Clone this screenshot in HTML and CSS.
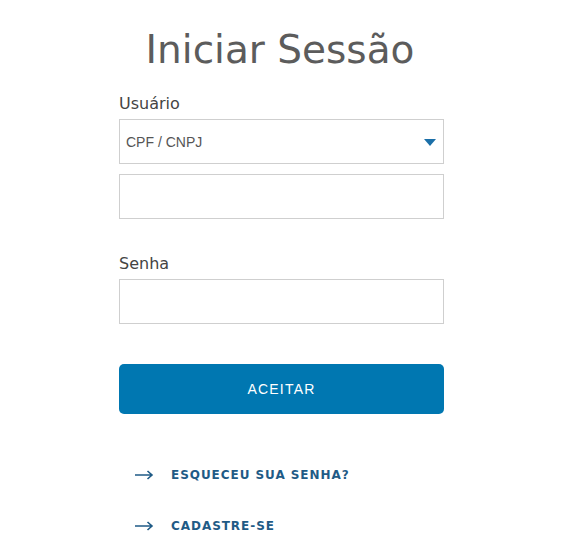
FILE: index.html
```html
<!DOCTYPE html>
<html lang="pt-BR">
<head>
    <meta charset="UTF-8">
    <meta name="viewport" content="width=device-width, initial-scale=1.0">
    <title>Iniciar Sessão</title>
    <link rel="stylesheet" href="styles.css">
</head>
<body>
    <main class="login">
        <h1 class="login-title">Iniciar Sessão</h1>

        <form class="login-form">
            <label class="field-label" for="doc-type">Usuário</label>
            <div class="select-wrap">
                <select id="doc-type" class="field select">
                    <option>CPF / CNPJ</option>
                </select>
                <svg class="select-caret" width="12" height="7" viewBox="0 0 12 7">
                    <path d="M0 0 L12 0 L6 7 Z" fill="#1b6fa8"/>
                </svg>
            </div>
            <input type="text" class="field field-user" aria-label="Documento">

            <label class="field-label label-senha" for="senha">Senha</label>
            <input type="password" id="senha" class="field">

            <button type="button" class="btn-accept">ACEITAR</button>
        </form>

        <ul class="links">
            <li>
                <a href="#">
                    <svg class="arrow" width="20" height="10" viewBox="0 0 20 10">
                        <path d="M1 5 H18 M13.5 1 L18 5 L13.5 9" fill="none" stroke="#1f5b86" stroke-width="1.6"/>
                    </svg>
                    <span>ESQUECEU SUA SENHA?</span>
                </a>
            </li>
            <li>
                <a href="#">
                    <svg class="arrow" width="20" height="10" viewBox="0 0 20 10">
                        <path d="M1 5 H18 M13.5 1 L18 5 L13.5 9" fill="none" stroke="#1f5b86" stroke-width="1.6"/>
                    </svg>
                    <span>CADASTRE-SE</span>
                </a>
            </li>
        </ul>
    </main>
</body>
</html>
```

FILE: styles.css
```css
:root {
    --title-color: #5c5c5c;
    --label-color: #444;
    --border-color: #cfcfcf;
    --primary: #0077b1;
    --link-color: #1f5b86;
}

body {
    margin: 0;
    padding: 0;
    background: #fff;
    font-family: "DejaVu Sans", Verdana, sans-serif;
}

.login {
    width: 325px;
    margin-left: 119px;
}

.login-title {
    margin: 27px 0 0 -3px;
    font-size: 39px;
    line-height: 46px;
    font-weight: normal;
    color: var(--title-color);
    text-align: center;
}

.login-form {
    display: flex;
    flex-direction: column;
    margin-top: 21px;
}

.field-label {
    font-size: 16px;
    line-height: 20px;
    color: var(--label-color);
    margin-bottom: 5px;
}

.label-senha {
    margin-top: 35px;
}

.field {
    box-sizing: border-box;
    width: 100%;
    height: 45px;
    border: 1px solid var(--border-color);
    border-radius: 0;
    background: #fff;
    padding: 0 6px;
    font-family: "Liberation Sans", Arial, sans-serif;
    font-size: 14px;
    color: #555;
    outline: none;
}

.select-wrap {
    position: relative;
}

.select {
    appearance: none;
    -webkit-appearance: none;
    display: block;
}

.select-caret {
    position: absolute;
    right: 8px;
    top: 20px;
    pointer-events: none;
}

.field-user {
    margin-top: 10px;
}

.btn-accept {
    margin-top: 40px;
    height: 50px;
    border: none;
    border-radius: 5px;
    background: var(--primary);
    color: #fff;
    font-family: "Liberation Sans", Arial, sans-serif;
    font-size: 14px;
    letter-spacing: 1.2px;
    cursor: pointer;
}

.links {
    list-style: none;
    margin: 51px 0 0;
    padding: 0 0 0 15px;
    display: flex;
    flex-direction: column;
    gap: 31px;
}

.links a {
    display: flex;
    align-items: center;
    gap: 17px;
    height: 20px;
    text-decoration: none;
    color: var(--link-color);
    font-size: 12px;
    font-weight: bold;
    letter-spacing: 0.95px;
}
```
